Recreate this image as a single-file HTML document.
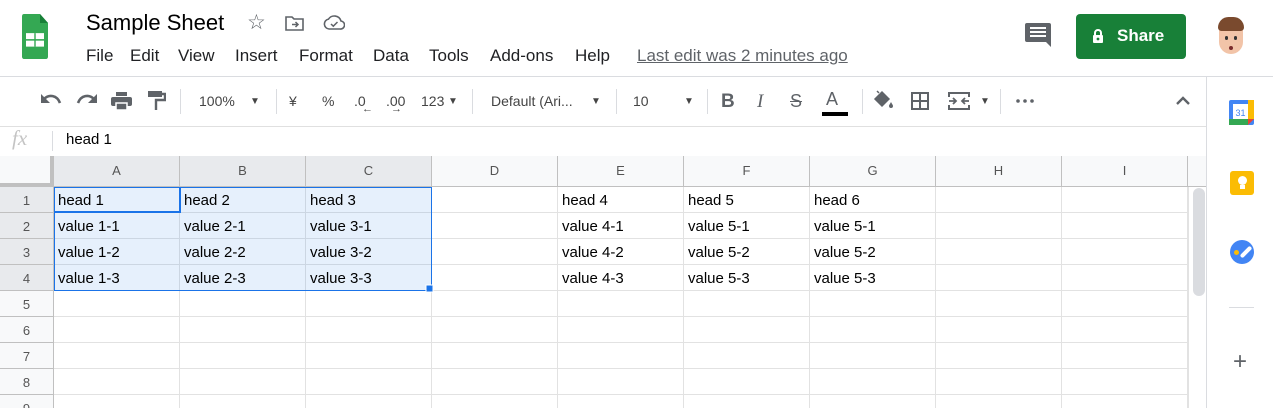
<!DOCTYPE html>
<html><head><meta charset="utf-8"><style>
*{margin:0;padding:0;box-sizing:border-box}
html,body{width:1273px;height:408px;overflow:hidden}
body{background:#fff;font-family:"Liberation Sans",Arial,sans-serif;position:relative;color:#202124}
.a{position:absolute;white-space:nowrap}
.tb{position:absolute;top:93px;font-size:14px;color:#444;white-space:nowrap}
.sep{position:absolute;top:89px;width:1px;height:25px;background:#dadce0}
.gh{position:absolute;top:156px;height:31px;background:#f8f9fa;border-bottom:1px solid #c0c0c0;font-size:13px;color:#555;text-align:center;line-height:30px;border-right:1px solid #c0c0c0}
.rh{position:absolute;left:0;width:54px;height:26px;background:#f8f9fa;border-right:1px solid #c0c0c0;border-bottom:1px solid #c0c0c0;font-size:13px;color:#555;text-align:center;line-height:27px}
.c{position:absolute;font-size:15px;color:#000;line-height:28px;white-space:nowrap}
</style></head><body>
<svg class="a" style="left:22px;top:14px" width="26" height="45" viewBox="0 0 26 40" preserveAspectRatio="none"><path d="M2 0h16l8 8v30a2 2 0 0 1-2 2H2a2 2 0 0 1-2-2V2a2 2 0 0 1 2-2z" fill="#34a853"/><path d="M18 0v8h8z" fill="#188038"/><rect x="4" y="17" width="18" height="12" fill="#fff"/><rect x="12.3" y="17" width="1.4" height="12" fill="#34a853"/><rect x="4" y="22.3" width="18" height="1.4" fill="#34a853"/></svg>
<div class="a" style="left:86px;top:10px;font-size:22px;color:#000">Sample Sheet</div>
<div class="a" style="left:247px;top:10px;font-size:21px;color:#5f6368">☆</div>
<svg class="a" style="left:285px;top:15px" width="20" height="16" viewBox="0 0 20 16"><path d="M1 2h6l2 2h9v11H1z" fill="none" stroke="#5f6368" stroke-width="1.6"/><path d="M7 9.5h6M10.5 7l2.5 2.5-2.5 2.5" fill="none" stroke="#5f6368" stroke-width="1.5"/></svg>
<svg class="a" style="left:323px;top:15px" width="22" height="16" viewBox="0 0 22 16"><path d="M6 14a5 5 0 0 1-.5-9.9A7 7 0 0 1 18 6a4 4 0 0 1-1 8z" fill="none" stroke="#5f6368" stroke-width="1.6"/><path d="M8 9l2.3 2.2L14.5 7" fill="none" stroke="#5f6368" stroke-width="1.5"/></svg>
<div class="a" style="left:86px;top:46px;font-size:17px;color:#202124">
<span class="a" style="left:0">File</span><span class="a" style="left:44px">Edit</span><span class="a" style="left:92px">View</span><span class="a" style="left:149px">Insert</span><span class="a" style="left:213px">Format</span><span class="a" style="left:287px">Data</span><span class="a" style="left:343px">Tools</span><span class="a" style="left:404px">Add-ons</span><span class="a" style="left:489px">Help</span></div>
<div class="a" style="left:637px;top:46px;font-size:17px;color:#5f6368;text-decoration:underline">Last edit was 2 minutes ago</div>
<svg class="a" style="left:1025px;top:22px" width="27" height="26" viewBox="0 0 27 26"><path d="M2 1h22a2 2 0 0 1 2 2v22l-5-5H2a2 2 0 0 1-2-2V3a2 2 0 0 1 2-2z" fill="#5f6368"/><path d="M5 6h16M5 10h16M5 14h16" stroke="#fff" stroke-width="2"/></svg>
<div class="a" style="left:1076px;top:14px;width:110px;height:45px;background:#188038;border-radius:4px;color:#fff;font-size:17px;font-weight:bold;line-height:44px"><svg class="a" style="left:16px;top:14px" width="12" height="16" viewBox="0 0 12 16"><path d="M3 7V5a3 3 0 0 1 6 0v2" fill="none" stroke="#fff" stroke-width="2"/><rect x="1" y="7" width="10" height="8" rx="1" fill="#fff"/><circle cx="6" cy="11" r="1.4" fill="#188038"/></svg><span class="a" style="left:41px">Share</span></div>
<div class="a" style="left:1219px;top:18px;width:24px;height:36px;border-radius:12px;background:#f2c4a8"></div>
<div class="a" style="left:1218px;top:17px;width:26px;height:14px;border-radius:12px 12px 4px 4px;background:#7a4a2e"></div>
<div class="a" style="left:1225px;top:36px;width:3px;height:4px;background:#333;border-radius:2px"></div><div class="a" style="left:1234px;top:36px;width:3px;height:4px;background:#333;border-radius:2px"></div><div class="a" style="left:1229px;top:46px;width:4px;height:4px;background:#7a2b2b;border-radius:2px"></div>
<div class="a" style="left:0;top:76px;width:1273px;height:1px;background:#dadce0"></div>
<svg class="a" style="left:40px;top:93px" width="22" height="14" viewBox="0 0 22 14"><path d="M4 6c5-5 13-4 16 4" fill="none" stroke="#5f6368" stroke-width="2.6"/><path d="M1 1v9h9z" fill="#5f6368"/></svg>
<svg class="a" style="left:76px;top:93px" width="22" height="14" viewBox="0 0 22 14"><path d="M18 6c-5-5-13-4-16 4" fill="none" stroke="#5f6368" stroke-width="2.6"/><path d="M21 1v9h-9z" fill="#5f6368"/></svg>
<svg class="a" style="left:111px;top:91px" width="21" height="20" viewBox="0 0 21 20"><rect x="5" y="1" width="11" height="4" fill="#5f6368"/><rect x="0" y="6" width="21" height="9" rx="2" fill="#5f6368"/><rect x="5" y="12" width="11" height="7" fill="#5f6368" stroke="#fff" stroke-width="1.5"/></svg>
<svg class="a" style="left:148px;top:90px" width="18" height="21" viewBox="0 0 18 21"><rect x="0" y="1" width="14" height="6" fill="#5f6368"/><path d="M14 4h3v6H8v10" fill="none" stroke="#5f6368" stroke-width="2.4"/></svg>
<div class="sep" style="left:180px"></div>
<div class="tb" style="left:199px">100%</div><div class="tb" style="left:250px;font-size:10px;top:96px">▼</div>
<div class="sep" style="left:276px"></div>
<div class="tb" style="left:289px">¥</div><div class="tb" style="left:322px">%</div>
<div class="tb" style="left:354px">.0</div><div class="tb" style="left:362px;top:103px;font-size:11px">←</div>
<div class="tb" style="left:386px">.00</div><div class="tb" style="left:391px;top:103px;font-size:11px">→</div>
<div class="tb" style="left:421px">123</div><div class="tb" style="left:448px;font-size:10px;top:96px">▼</div>
<div class="sep" style="left:472px"></div>
<div class="tb" style="left:491px">Default (Ari...</div><div class="tb" style="left:591px;font-size:10px;top:96px">▼</div>
<div class="sep" style="left:616px"></div>
<div class="tb" style="left:633px">10</div><div class="tb" style="left:684px;font-size:10px;top:96px">▼</div>
<div class="sep" style="left:707px"></div>
<div class="tb" style="left:721px;font-size:19px;font-weight:bold;top:91px;color:#5f6368">B</div>
<div class="tb" style="left:757px;font-size:19px;font-style:italic;top:91px;color:#5f6368;font-family:'Liberation Serif',serif">I</div>
<div class="tb" style="left:790px;font-size:18px;top:91px;color:#5f6368;text-decoration:line-through">S</div>
<div class="tb" style="left:826px;font-size:18px;top:89px;color:#5f6368">A</div>
<div class="a" style="left:822px;top:112px;width:26px;height:4px;background:#000"></div>
<div class="sep" style="left:862px"></div>
<svg class="a" style="left:872px;top:90px" width="22" height="20" viewBox="0 0 22 20"><path d="M5 1l2 2M3 9l7-7 7 7-7 7z" fill="#5f6368" stroke="#5f6368" stroke-width="1.5"/><path d="M19 12c-1 2-2 3-2 4a2 2 0 0 0 4 0c0-1-1-2-2-4z" fill="#5f6368"/></svg>
<svg class="a" style="left:911px;top:92px" width="18" height="18" viewBox="0 0 18 18"><rect x="1" y="1" width="16" height="16" fill="none" stroke="#5f6368" stroke-width="2"/><path d="M9 1v16M1 9h16" stroke="#5f6368" stroke-width="2"/></svg>
<svg class="a" style="left:948px;top:92px" width="22" height="18" viewBox="0 0 22 18"><path d="M1 5V1h20v4M1 13v4h20v-4" fill="none" stroke="#5f6368" stroke-width="2"/><path d="M1 9h7M5 6l3 3-3 3M21 9h-7M17 6l-3 3 3 3" fill="none" stroke="#5f6368" stroke-width="1.8"/></svg>
<div class="tb" style="left:980px;font-size:10px;top:96px">▼</div>
<div class="sep" style="left:1000px"></div>
<svg class="a" style="left:1016px;top:99px" width="18" height="4" viewBox="0 0 18 4"><circle cx="2" cy="2" r="1.8" fill="#5f6368"/><circle cx="9" cy="2" r="1.8" fill="#5f6368"/><circle cx="16" cy="2" r="1.8" fill="#5f6368"/></svg>
<svg class="a" style="left:1175px;top:95px" width="16" height="10" viewBox="0 0 16 10"><path d="M2 9l6-6 6 6" fill="none" stroke="#5f6368" stroke-width="2.4"/></svg>
<div class="a" style="left:0;top:126px;width:1206px;height:1px;background:#e0e0e0"></div>
<div class="a" style="left:12px;top:126px;font-size:21px;color:#c4c4c4;font-style:italic;font-family:'Liberation Serif',serif">fx</div>
<div class="a" style="left:52px;top:131px;width:1px;height:20px;background:#dadce0"></div>
<div class="a" style="left:66px;top:131px;font-size:15px;color:#000">head 1</div>
<div class="a" style="left:1206px;top:77px;width:1px;height:331px;background:#dadce0"></div>
<svg class="a" style="left:1229px;top:100px" width="25" height="25" viewBox="0 0 25 25"><rect x="0" y="0" width="25" height="25" rx="2" fill="#4285f4"/><rect x="0" y="19" width="19" height="6" fill="#34a853"/><rect x="19" y="0" width="6" height="19" fill="#fbbc04"/><path d="M19 19h6l-6 6z" fill="#ea4335"/><rect x="4" y="4" width="15" height="15" fill="#fff"/><text x="11.5" y="16" font-size="9" fill="#4285f4" text-anchor="middle" font-family="Liberation Sans">31</text></svg>
<div class="a" style="left:1230px;top:171px;width:24px;height:24px;background:#fbbc04;border-radius:3px"></div>
<div class="a" style="left:1238px;top:176px;width:9px;height:9px;background:#fff;border-radius:5px"></div><div class="a" style="left:1240px;top:185px;width:5px;height:4px;background:#fff"></div>
<div class="a" style="left:1230px;top:240px;width:24px;height:24px;background:#4285f4;border-radius:12px"></div>
<div class="a" style="left:1234px;top:250px;width:5px;height:5px;background:#fbbc04;border-radius:3px"></div>
<div class="a" style="left:1239px;top:250px;width:14px;height:4px;background:#fff;border-radius:2px;transform:rotate(-45deg)"></div>
<div class="a" style="left:1229px;top:307px;width:25px;height:1px;background:#dadce0"></div>
<div class="a" style="left:1233px;top:352px;font-size:24px;color:#5f6368;line-height:20px">+</div>
<div class="a" style="left:0;top:156px;width:54px;height:31px;background:#f8f9fa;border-right:4px solid #c0c0c0;border-bottom:4px solid #c0c0c0"></div>
<div class="gh" style="left:54px;width:126px;background:#e8eaed">A</div>
<div class="gh" style="left:180px;width:126px;background:#e8eaed">B</div>
<div class="gh" style="left:306px;width:126px;background:#e8eaed">C</div>
<div class="gh" style="left:432px;width:126px">D</div>
<div class="gh" style="left:558px;width:126px">E</div>
<div class="gh" style="left:684px;width:126px">F</div>
<div class="gh" style="left:810px;width:126px">G</div>
<div class="gh" style="left:936px;width:126px">H</div>
<div class="gh" style="left:1062px;width:126px">I</div>
<div class="gh" style="left:1188px;width:18px;border-right:none"></div>
<svg class="a" style="left:54px;top:187px" width="1134" height="221">
<g stroke="#e2e2e2" stroke-width="1">
<path d="M0 25.5H1134M0 51.5H1134M0 77.5H1134M0 103.5H1134M0 129.5H1134M0 155.5H1134M0 181.5H1134M0 207.5H1134"/>
<path d="M125.5 0V221M251.5 0V221M377.5 0V221M503.5 0V221M629.5 0V221M755.5 0V221M881.5 0V221M1007.5 0V221M1133.5 0V221"/>
</g>
<rect x="0" y="0" width="378" height="104" fill="#1a73e8" fill-opacity="0.11"/>
<rect x="0.5" y="0.5" width="377" height="103" fill="none" stroke="#1a73e8" stroke-width="1"/>
<rect x="0" y="0" width="126" height="26" fill="none" stroke="#1a73e8" stroke-width="2" transform="translate(0,-1)"/>
<rect x="372" y="98" width="7" height="7" fill="#1a73e8" stroke="#fff" stroke-width="1"/>
</svg>
<div class="a" style="left:1188px;top:187px;width:18px;height:221px;background:#fff;border-left:1px solid #e2e2e2"></div>
<div class="a" style="left:1193px;top:188px;width:12px;height:108px;background:#dadce0;border-radius:6px"></div>
<div class="rh" style="top:187px;background:#e8eaed">1</div>
<div class="rh" style="top:213px;background:#e8eaed">2</div>
<div class="rh" style="top:239px;background:#e8eaed">3</div>
<div class="rh" style="top:265px;background:#e8eaed">4</div>
<div class="rh" style="top:291px">5</div>
<div class="rh" style="top:317px">6</div>
<div class="rh" style="top:343px">7</div>
<div class="rh" style="top:369px">8</div>
<div class="rh" style="top:395px;height:13px;border-bottom:none;overflow:hidden">9</div>
<div class="c" style="left:58px;top:187px">head 1</div><div class="c" style="left:184px;top:187px">head 2</div><div class="c" style="left:310px;top:187px">head 3</div>
<div class="c" style="left:562px;top:187px">head 4</div><div class="c" style="left:688px;top:187px">head 5</div><div class="c" style="left:814px;top:187px">head 6</div>
<div class="c" style="left:58px;top:213px">value 1-1</div><div class="c" style="left:184px;top:213px">value 2-1</div><div class="c" style="left:310px;top:213px">value 3-1</div>
<div class="c" style="left:562px;top:213px">value 4-1</div><div class="c" style="left:688px;top:213px">value 5-1</div><div class="c" style="left:814px;top:213px">value 5-1</div>
<div class="c" style="left:58px;top:239px">value 1-2</div><div class="c" style="left:184px;top:239px">value 2-2</div><div class="c" style="left:310px;top:239px">value 3-2</div>
<div class="c" style="left:562px;top:239px">value 4-2</div><div class="c" style="left:688px;top:239px">value 5-2</div><div class="c" style="left:814px;top:239px">value 5-2</div>
<div class="c" style="left:58px;top:265px">value 1-3</div><div class="c" style="left:184px;top:265px">value 2-3</div><div class="c" style="left:310px;top:265px">value 3-3</div>
<div class="c" style="left:562px;top:265px">value 4-3</div><div class="c" style="left:688px;top:265px">value 5-3</div><div class="c" style="left:814px;top:265px">value 5-3</div>
</body></html>
